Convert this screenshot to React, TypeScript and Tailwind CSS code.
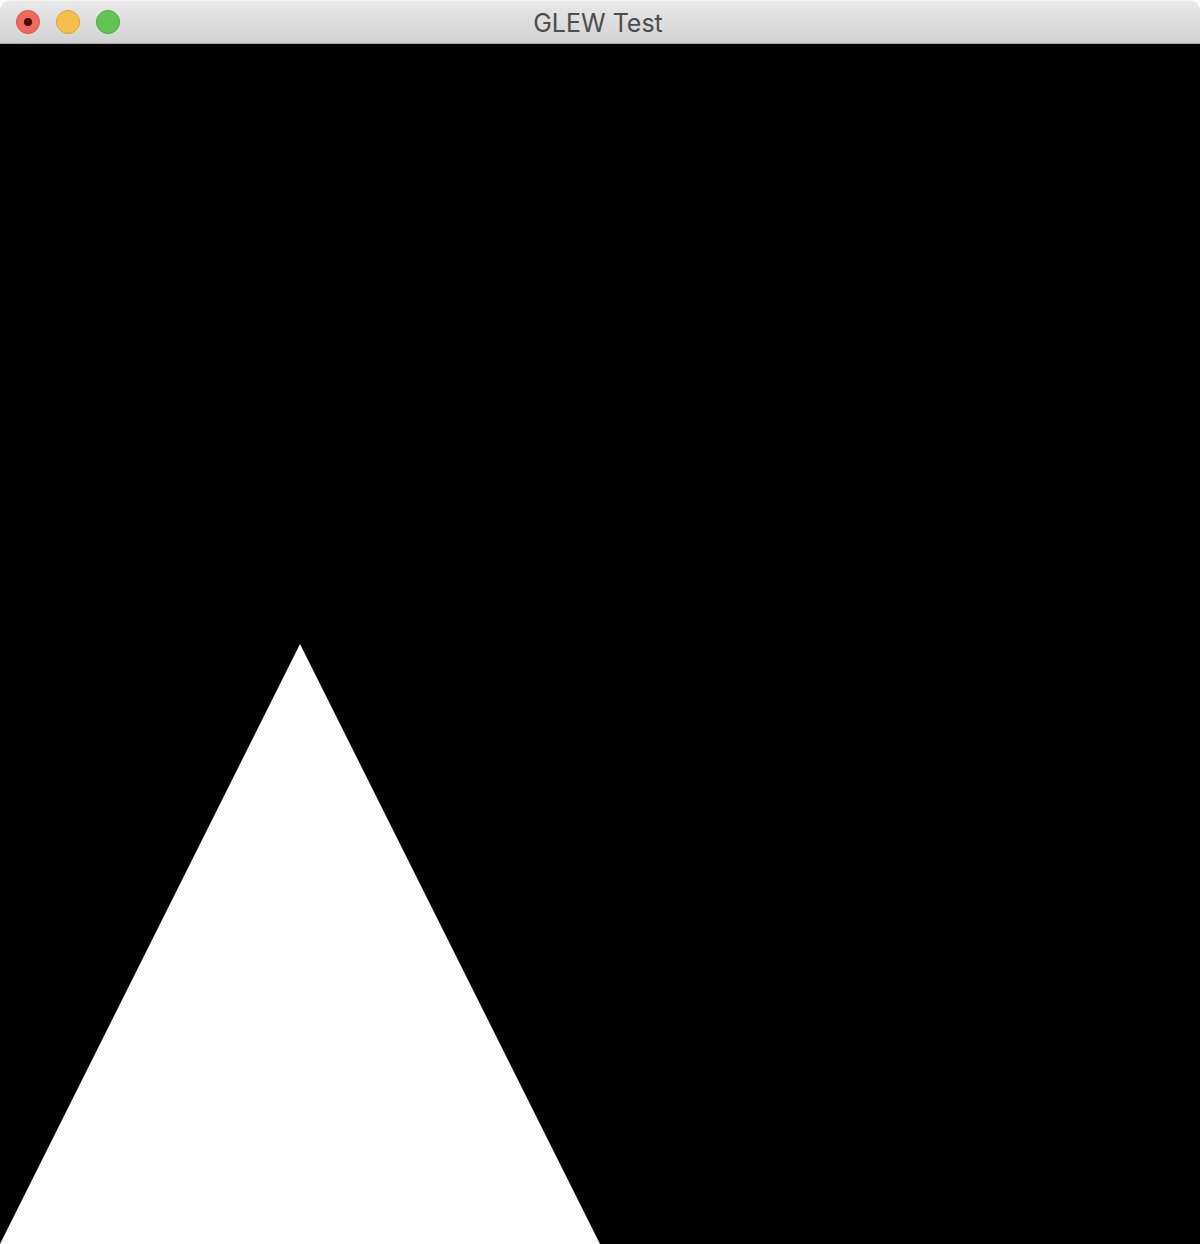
import React from "react";

export default function App() {
  return (
    <div className="w-[1200px] h-[1244px] bg-white flex flex-col overflow-hidden">
      <div className="relative h-[44px] shrink-0 rounded-t-[10px] bg-gradient-to-b from-[#e9e9e9] to-[#d2d2d2] border-t border-[#f4f4f4] border-b border-b-[#a9a9a9] flex items-center">
        <div className="flex items-center gap-[16px] pl-[16px]">
          <div className="w-[24px] h-[24px] rounded-full bg-[#ee6a5f] border border-[#d9534a] flex items-center justify-center">
            <div className="w-[8px] h-[8px] rounded-full bg-[#4b0906]" />
          </div>
          <div className="w-[24px] h-[24px] rounded-full bg-[#f6be4f] border border-[#dea236]" />
          <div className="w-[24px] h-[24px] rounded-full bg-[#61c454] border border-[#4ea83f]" />
        </div>
        <div className="absolute inset-0 flex items-center justify-center pointer-events-none pt-[3px] pr-[4px]">
          <span className="text-[25px] text-[#4d4d4d] font-['Inter',sans-serif] leading-none">GLEW Test</span>
        </div>
      </div>
      <div className="flex-1 bg-black">
        <svg width="1200" height="1200" viewBox="0 0 1200 1200" className="block">
          <polygon points="0,1200 300,600 600,1200" fill="#ffffff" />
        </svg>
      </div>
    </div>
  );
}
